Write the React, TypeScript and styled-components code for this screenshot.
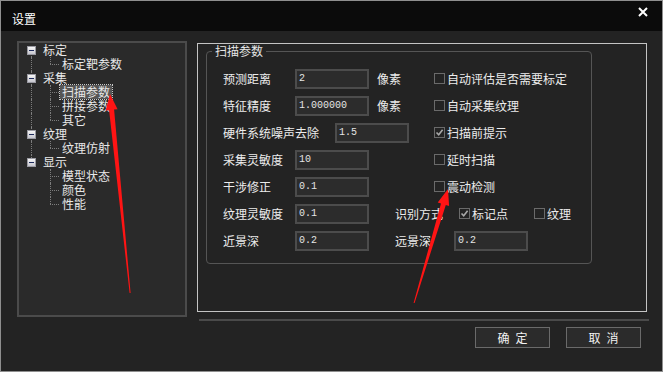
import React from 'react';
import styled, { createGlobalStyle } from 'styled-components';

const tree = [
  { label: '标定', children: ['标定靶参数'] },
  { label: '采集', children: ['扫描参数', '拼接参数', '其它'] },
  { label: '纹理', children: ['纹理仿射'] },
  { label: '显示', children: ['模型状态', '颜色', '性能'] },
];

const selected = '扫描参数';

const Check = ({ label, checked }: CheckProps) => (
  <CheckLabel>
    <Box>
      {checked && (
        <svg width="9" height="9" viewBox="0 0 9 9">
          <path d="M1.5 4.5 L3.7 6.8 L7.6 1.8" fill="none" stroke="#a8a8a8" strokeWidth="1.6" />
        </svg>
      )}
    </Box>
    {label}
  </CheckLabel>
);

const App = () => {
  return (
    <>
      <GlobalStyle />
      <Window>
        <TitleBar>
          <Title>设置</Title>
          <Close>
            <svg width="10" height="10" viewBox="0 0 10 10">
              <path d="M1 1 L9 9 M9 1 L1 9" stroke="#ffffff" strokeWidth="2" />
            </svg>
          </Close>
        </TitleBar>

        <Body>
          <TreePanel>
            {tree.map((node, i) => {
              const last = i === tree.length - 1;
              return (
                <React.Fragment key={node.label}>
                  <TreeRow>
                    <RootCell $up={i > 0} $down={!last}>
                      <Expander />
                    </RootCell>
                    <NodeText>{node.label}</NodeText>
                  </TreeRow>
                  {node.children.map((child, j) => (
                    <TreeRow key={child}>
                      <RootCell $up={!last} $down={!last} />
                      <Elbow $last={j === node.children.length - 1} />
                      <NodeText $active={child === selected}>{child}</NodeText>
                    </TreeRow>
                  ))}
                </React.Fragment>
              );
            })}
          </TreePanel>

          <RightPane>
            <Frame>
              <Group>
                <Legend>扫描参数</Legend>
                <FormGrid>
                  <Left $span>
                    <FieldLabel>预测距离</FieldLabel>
                    <Input>2</Input>
                    <Unit>像素</Unit>
                  </Left>
                  <Right>
                    <Check label="自动评估是否需要标定" />
                  </Right>

                  <Left $span>
                    <FieldLabel>特征精度</FieldLabel>
                    <Input>1.000000</Input>
                    <Unit>像素</Unit>
                  </Left>
                  <Right>
                    <Check label="自动采集纹理" />
                  </Right>

                  <Left $span>
                    <FieldLabel $width={112}>硬件系统噪声去除</FieldLabel>
                    <Input>1.5</Input>
                  </Left>
                  <Right>
                    <Check label="扫描前提示" checked />
                  </Right>

                  <Left $span>
                    <FieldLabel>采集灵敏度</FieldLabel>
                    <Input>10</Input>
                  </Left>
                  <Right>
                    <Check label="延时扫描" />
                  </Right>

                  <Left $span>
                    <FieldLabel>干涉修正</FieldLabel>
                    <Input>0.1</Input>
                  </Left>
                  <Right>
                    <Check label="震动检测" />
                  </Right>

                  <Left>
                    <FieldLabel>纹理灵敏度</FieldLabel>
                    <Input>0.1</Input>
                  </Left>
                  <Wide>
                    <FieldLabel $width={64}>识别方式</FieldLabel>
                    <Check label="标记点" checked />
                    <Spacer />
                    <Check label="纹理" />
                  </Wide>

                  <Left>
                    <FieldLabel>近景深</FieldLabel>
                    <Input>0.2</Input>
                  </Left>
                  <Wide>
                    <FieldLabel $width={59}>远景深</FieldLabel>
                    <Input>0.2</Input>
                  </Wide>
                </FormGrid>
              </Group>
            </Frame>
            <Separator />
            <ButtonRow>
              <Button>确定</Button>
              <Button>取消</Button>
            </ButtonRow>
          </RightPane>
        </Body>

        <Arrows width="663" height="372" viewBox="0 0 663 372">
          <polygon
            fill="#ff1414"
            points="110,94 117.6,109.3 114.1,109.6 130.6,293 129.6,293 109.1,110.2 105.6,110.5"
          />
          <polygon
            fill="#ff1414"
            points="448,189 449.1,206 445.8,205 414.6,303 413.6,303 441,203.6 437.7,202.6"
          />
        </Arrows>
      </Window>
    </>
  );
};

export default App;

interface CheckProps {
  label: string;
  checked?: boolean;
}

const GlobalStyle = createGlobalStyle`
  html, body {
    margin: 0;
    padding: 0;
    background: #232323;
  }
  body {
    font-family: "Noto Sans CJK SC", "Noto Sans", sans-serif;
    font-size: 12px;
    color: #ececec;
  }
`;

const Window = styled.div`
  position: relative;
  width: 663px;
  height: 372px;
  box-sizing: border-box;
  border: 1px solid #8f8f8f;
  background: #232323;
  display: flex;
  flex-direction: column;
  overflow: hidden;
`;

const TitleBar = styled.div`
  height: 30px;
  flex: none;
  background: #0b0b0b;
  display: flex;
  justify-content: space-between;
  align-items: flex-start;
`;

const Title = styled.div`
  margin: 11px 0 0 11px;
  line-height: 14px;
  color: #ffffff;
`;

const Close = styled.div`
  margin: 6px 14px 0 0;
  display: flex;
`;

const Body = styled.div`
  flex: 1;
  display: flex;
  align-items: flex-start;
  gap: 10px;
  padding: 10px 0 0 16px;
`;

const TreePanel = styled.div`
  width: 170px;
  height: 276px;
  box-sizing: border-box;
  flex: none;
  border: 2px solid #4b4b4b;
  background: #2a2a2a;
  padding: 0;
`;

const TreeRow = styled.div`
  display: flex;
  align-items: center;
  height: 14px;
`;

const RootCell = styled.span<{ $up?: boolean; $down?: boolean }>`
  position: relative;
  width: 22px;
  height: 14px;
  flex: none;
  display: flex;
  align-items: center;

  &::before {
    content: '';
    position: absolute;
    left: 12px;
    top: ${({ $up }) => ($up ? 0 : 7)}px;
    bottom: ${({ $down }) => ($down ? 0 : 7)}px;
    border-left: 1px dotted #7c7c7c;
  }
`;

const Expander = styled.span`
  position: relative;
  z-index: 1;
  margin-left: 8px;
  width: 9px;
  height: 9px;
  box-sizing: border-box;
  border: 1px solid #9a9aa2;
  background: linear-gradient(#f6f6f6, #c6c6ce);

  &::after {
    content: '';
    position: absolute;
    left: 1px;
    top: 3px;
    width: 5px;
    height: 1px;
    background: #1d2a5c;
  }
`;

const Elbow = styled.span<{ $last: boolean }>`
  position: relative;
  width: 19px;
  height: 14px;
  flex: none;

  &::before {
    content: '';
    position: absolute;
    left: 9px;
    top: 0;
    bottom: ${({ $last }) => ($last ? 7 : 0)}px;
    border-left: 1px dotted #7c7c7c;
  }

  &::after {
    content: '';
    position: absolute;
    left: 9px;
    top: 7px;
    width: 9px;
    border-top: 1px dotted #7c7c7c;
  }
`;

const NodeText = styled.span<{ $active?: boolean }>`
  padding: 0 2px;
  line-height: 14px;
  color: #e8e8e8;
  white-space: nowrap;
  background: ${({ $active }) => ($active ? '#565656' : 'transparent')};
  outline: ${({ $active }) => ($active ? '1px dotted #c8c8c8' : 'none')};
`;

const RightPane = styled.div`
  width: 452px;
  margin-top: 2px;
  display: flex;
  flex-direction: column;
`;

const Frame = styled.div`
  width: 450px;
  height: 269px;
  box-sizing: border-box;
  border: 1px solid #c4c4c4;
`;

const Group = styled.fieldset`
  margin: 0 0 0 8px;
  padding: 0;
  width: 386px;
  box-sizing: border-box;
  border: 1px solid #555555;
  border-radius: 4px;
  min-width: 0;
`;

const Legend = styled.legend`
  margin-left: 5px;
  padding: 0 3px;
  line-height: 14px;
  color: #e6e6e6;
`;

const FormGrid = styled.div`
  display: grid;
  grid-template-columns: 172px 39px 1fr;
  grid-auto-rows: 27px;
  padding: 7px 0 9px 16px;
`;

const Left = styled.div<{ $span?: boolean }>`
  grid-column: ${({ $span }) => ($span ? '1 / 3' : '1 / 2')};
  display: flex;
  align-items: center;
`;

const Right = styled.div`
  grid-column: 3 / 4;
  display: flex;
  align-items: center;
`;

const Wide = styled.div`
  grid-column: 2 / 4;
  display: flex;
  align-items: center;
`;

const FieldLabel = styled.span<{ $width?: number }>`
  width: ${({ $width }) => $width ?? 72}px;
  flex: none;
  white-space: nowrap;
  line-height: 14px;
  color: #ececec;
`;

const Input = styled.div`
  width: 74px;
  height: 20px;
  box-sizing: border-box;
  flex: none;
  border: 2px solid #4c4c4c;
  background: #2c2c2c;
  padding: 2px 0 0 2px;
  font-family: "Liberation Mono", "DejaVu Sans Mono", monospace;
  font-size: 10px;
  line-height: 12px;
  color: #e4e4e4;
`;

const Unit = styled.span`
  margin-left: 8px;
  line-height: 14px;
`;

const CheckLabel = styled.label`
  display: flex;
  align-items: center;
  gap: 2px;
  line-height: 14px;
  white-space: nowrap;
  color: #ececec;
`;

const Box = styled.span`
  width: 11px;
  height: 11px;
  box-sizing: border-box;
  border: 1px solid #6a6a6a;
  display: flex;
  align-items: center;
  justify-content: center;
`;

const Spacer = styled.span`
  width: 26px;
  flex: none;
`;

const Separator = styled.div`
  margin: 7px 0 0 2px;
  width: 450px;
  height: 2px;
  background: #4a4a4a;
`;

const ButtonRow = styled.div`
  display: flex;
  justify-content: flex-end;
  gap: 16px;
  margin-top: 6px;
  padding-right: 8px;
`;

const Button = styled.button`
  width: 75px;
  height: 21px;
  box-sizing: border-box;
  border: 1px solid #6a6a6a;
  background: #2b2b2b;
  color: #f2f2f2;
  font-family: "Noto Sans CJK SC", sans-serif;
  font-size: 12px;
  line-height: 14px;
  letter-spacing: 6px;
  text-indent: 6px;
  padding: 0;
`;

const Arrows = styled.svg`
  position: absolute;
  left: -1px;
  top: -1px;
  pointer-events: none;
`;
